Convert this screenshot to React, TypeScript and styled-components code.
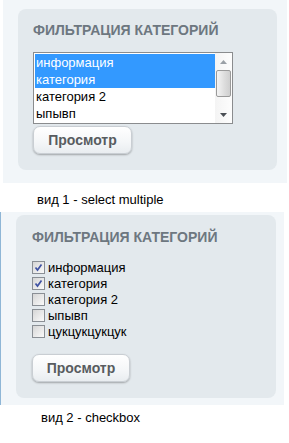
import React from "react";
import styled, { createGlobalStyle } from "styled-components";

const Global = createGlobalStyle`
  html, body {
    margin: 0;
    padding: 0;
    background: #ffffff;
    font-family: "Liberation Sans", Arial, sans-serif;
  }
`;

const Page = styled.div`
  width: 289px;
  height: 443px;
  overflow: hidden;
`;

const SelectBlock = styled.div`
  box-sizing: border-box;
  margin-left: 3px;
  width: 284px;
  padding: 9px 10px 13px 15px;
  background: #f2f6f9;
`;

const CheckBlock = styled.div`
  box-sizing: border-box;
  width: 284px;
  height: 193px;
  padding: 3px 8px 7px 15px;
  background: #f2f6f9;
  border-left: 1px solid #8fb6d6;
`;

const Panel = styled.div<{ $h: number; $top: number; $left: number }>`
  box-sizing: border-box;
  height: ${(p) => p.$h}px;
  padding: ${(p) => p.$top}px 16px 0 ${(p) => p.$left}px;
  background: #e3e9ed;
  border-radius: 8px;
  display: flex;
  flex-direction: column;
  align-items: flex-start;
`;

const Title = styled.h3`
  margin: 0 0 14px;
  font-size: 14px;
  line-height: 16px;
  font-weight: bold;
  color: #6d7780;
  text-transform: uppercase;
`;

const ListBox = styled.div`
  box-sizing: border-box;
  width: 200px;
  height: 72px;
  border: 1px solid #8a8c8e;
  background: #ffffff;
  display: flex;
  padding: 1px 0 0 1px;
`;

const Options = styled.div`
  flex: 1;
  overflow: hidden;
`;

const Option = styled.div<{ $selected?: boolean }>`
  height: 17px;
  line-height: 17px;
  font-size: 13px;
  padding-left: 1px;
  color: ${(p) => (p.$selected ? "#ffffff" : "#000000")};
  background: ${(p) => (p.$selected ? "#3399ff" : "transparent")};
`;

const Scrollbar = styled.div`
  width: 17px;
  margin-top: -1px;
  background: linear-gradient(to right, #f4f4f4, #fdfdfd);
  display: flex;
  flex-direction: column;
  align-items: center;
`;

const Arrow = styled.div`
  height: 17px;
  display: flex;
  align-items: center;
  justify-content: center;
`;

const Track = styled.div`
  flex: 1;
`;

const Thumb = styled.div`
  box-sizing: border-box;
  width: 15px;
  height: 27px;
  border: 1px solid #9a9a9a;
  border-radius: 2px;
  background: linear-gradient(to right, #f4f4f4, #dcdcdc 60%, #cfcfcf);
`;

const Button = styled.button<{ $w: number; $gap: number }>`
  box-sizing: border-box;
  display: block;
  width: ${(p) => p.$w}px;
  height: 28px;
  margin-top: ${(p) => p.$gap}px;
  padding: 0;
  border: 1px solid #c9ced3;
  border-radius: 7px;
  background: linear-gradient(to bottom, #ffffff, #f4f6f8 60%, #e9edf0);
  box-shadow: 0 1px 2px rgba(0, 0, 0, 0.3);
  font-family: "Liberation Sans", Arial, sans-serif;
  font-size: 14px;
  font-weight: bold;
  color: #585c60;
`;

const Caption = styled.div<{ $indent: number; $top: number; $h: number }>`
  box-sizing: border-box;
  height: ${(p) => p.$h}px;
  padding: ${(p) => p.$top}px 0 0 ${(p) => p.$indent}px;
  font-size: 13px;
  line-height: 15px;
  color: #000000;
`;

const CheckList = styled.div`
  display: flex;
  flex-direction: column;
`;

const CheckRow = styled.label`
  display: flex;
  align-items: center;
  height: 16px;
  font-size: 13px;
  color: #000000;
`;

const Box = styled.span`
  box-sizing: border-box;
  width: 13px;
  height: 13px;
  border: 1px solid #8a8f95;
  background: linear-gradient(135deg, #d6d6d6, #fafafa);
  margin-right: 3px;
  display: flex;
  align-items: center;
  justify-content: center;
`;

const CheckBox = ({ checked }: { checked?: boolean }) => (
  <Box>
    {checked && (
      <svg width="9" height="9" viewBox="0 0 9 9">
        <path d="M1.5 4.5 L3.5 7 L7.5 1.5" fill="none" stroke="#3f52a3" strokeWidth="1.7" />
      </svg>
    )}
  </Box>
);

const items = ["информация", "категория", "категория 2", "ыпывп", "цукцукцукцук"];

const App: React.FC = () => {
  return (
    <Page>
      <Global />
      <SelectBlock>
        <Panel $h={161} $top={13} $left={15}>
          <Title>Фильтрация категорий</Title>
          <ListBox>
            <Options>
              {items.slice(0, 4).map((it, i) => (
                <Option key={it} $selected={i < 2}>{it}</Option>
              ))}
            </Options>
            <Scrollbar>
              <Arrow>
                <svg width="7" height="4" viewBox="0 0 7 4"><path d="M0 4 L3.5 0 L7 4 Z" fill="#9aa0a6" /></svg>
              </Arrow>
              <Thumb />
              <Track />
              <Arrow>
                <svg width="7" height="4" viewBox="0 0 7 4"><path d="M0 0 L3.5 4 L7 0 Z" fill="#4a4f55" /></svg>
              </Arrow>
            </Scrollbar>
          </ListBox>
          <Button $w={99} $gap={2}>Просмотр</Button>
        </Panel>
      </SelectBlock>
      <Caption $indent={37} $top={9} $h={29}>вид 1 - select multiple</Caption>
      <CheckBlock>
        <Panel $h={183} $top={14} $left={16}>
          <Title>Фильтрация категорий</Title>
          <CheckList>
            {items.map((it, i) => (
              <CheckRow key={it}>
                <CheckBox checked={i < 2} />
                {it}
              </CheckRow>
            ))}
          </CheckList>
          <Button $w={98} $gap={15}>Просмотр</Button>
        </Panel>
      </CheckBlock>
      <Caption $indent={41} $top={5} $h={30}>вид 2 - checkbox</Caption>
    </Page>
  );
};

export default App;
